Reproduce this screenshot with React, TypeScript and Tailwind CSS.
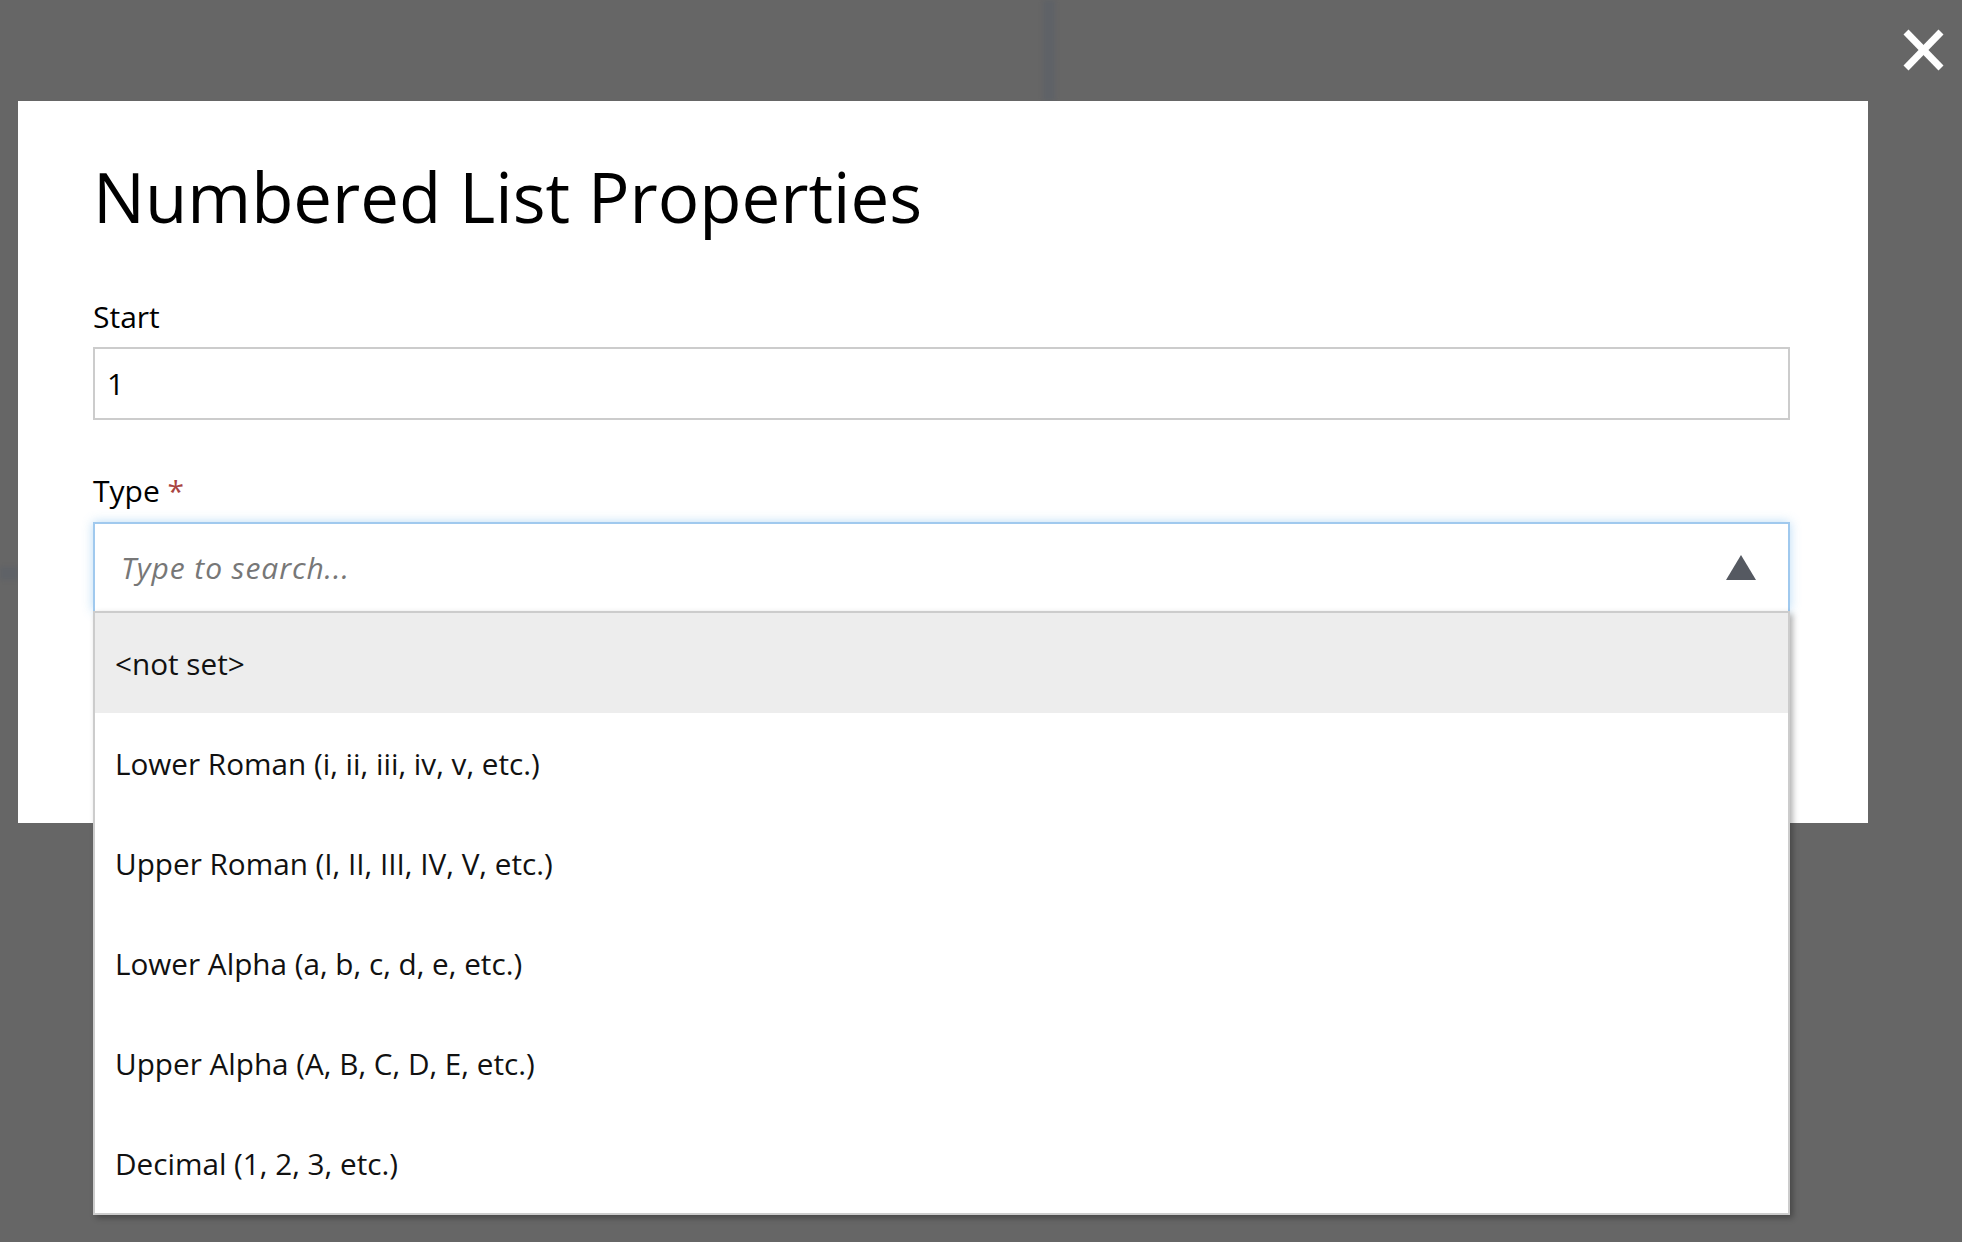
import React from "react";

const items = [
  "<not set>",
  "Lower Roman (i, ii, iii, iv, v, etc.)",
  "Upper Roman (I, II, III, IV, V, etc.)",
  "Lower Alpha (a, b, c, d, e, etc.)",
  "Upper Alpha (A, B, C, D, E, etc.)",
  "Decimal (1, 2, 3, etc.)",
];

export default function App() {
  return (
    <div
      className="relative h-[1242px] w-[1962px] overflow-hidden bg-[#666666] text-black"
      style={{ fontFamily: '"Open Sans", "Noto Sans", sans-serif' }}
    >
      {/* faint page content seen through the overlay */}
      <div className="absolute left-[1043px] top-0 h-[101px] w-[12px] bg-[#5f6267] blur-[2px]" />
      <div className="absolute left-0 top-[567px] h-[13px] w-[18px] bg-[#5f6267] blur-[2px]" />

      {/* close button */}
      <button className="absolute left-[1903px] top-[29px] h-[42px] w-[41px]" aria-label="Close">
        <svg viewBox="0 0 41 42" width="41" height="42">
          <line x1="3" y1="3" x2="38" y2="39" stroke="#ffffff" strokeWidth="7" />
          <line x1="38" y1="3" x2="3" y2="39" stroke="#ffffff" strokeWidth="7" />
        </svg>
      </button>

      <div className="pl-[18px] pt-[101px]">
        <div className="relative h-[722px] w-[1850px] bg-white pl-[75px] pr-[78px] pt-[61px]">
          <h1 className="text-[69px] font-normal leading-none">Numbered List Properties</h1>

          <label className="mt-[71px] block text-[30px] leading-none">Start</label>
          <div className="mt-[15px] flex h-[73px] items-center border-2 border-[#cccccc] pl-[12px] text-[30px] leading-none">
            1
          </div>

          <label className="mt-[56px] block text-[30px] leading-none">
            Type <span className="text-[#a94442]">*</span>
          </label>

          <div className="relative mt-[16px]">
            <div className="flex h-[89px] items-center justify-between border-2 border-b-0 border-[#a0c9ee] pl-[26px] pr-[32px] shadow-[0_0_10px_rgba(102,175,233,0.45)]">
              <span className="pt-[1px] text-[30px] italic leading-none tracking-[0.9px] text-[#777777]">
                Type to search...
              </span>
              <svg width="30" height="25" viewBox="0 0 30 25">
                <polygon points="15,0 30,25 0,25" fill="#555961" />
              </svg>
            </div>
            <div className="absolute left-0 right-0 top-full z-10 border-2 border-[#cccccc] bg-white shadow-[3px_3px_6px_rgba(0,0,0,0.3)]">
              {items.map((t, i) => (
                <div
                  key={t}
                  className={
                    "flex h-[100px] items-center pl-[20px] pt-[2px] text-[29.7px] leading-none text-[#111111] " +
                    (i === 0 ? "bg-[#ededed]" : "bg-white")
                  }
                >
                  {t}
                </div>
              ))}
            </div>
          </div>
        </div>
      </div>
    </div>
  );
}
